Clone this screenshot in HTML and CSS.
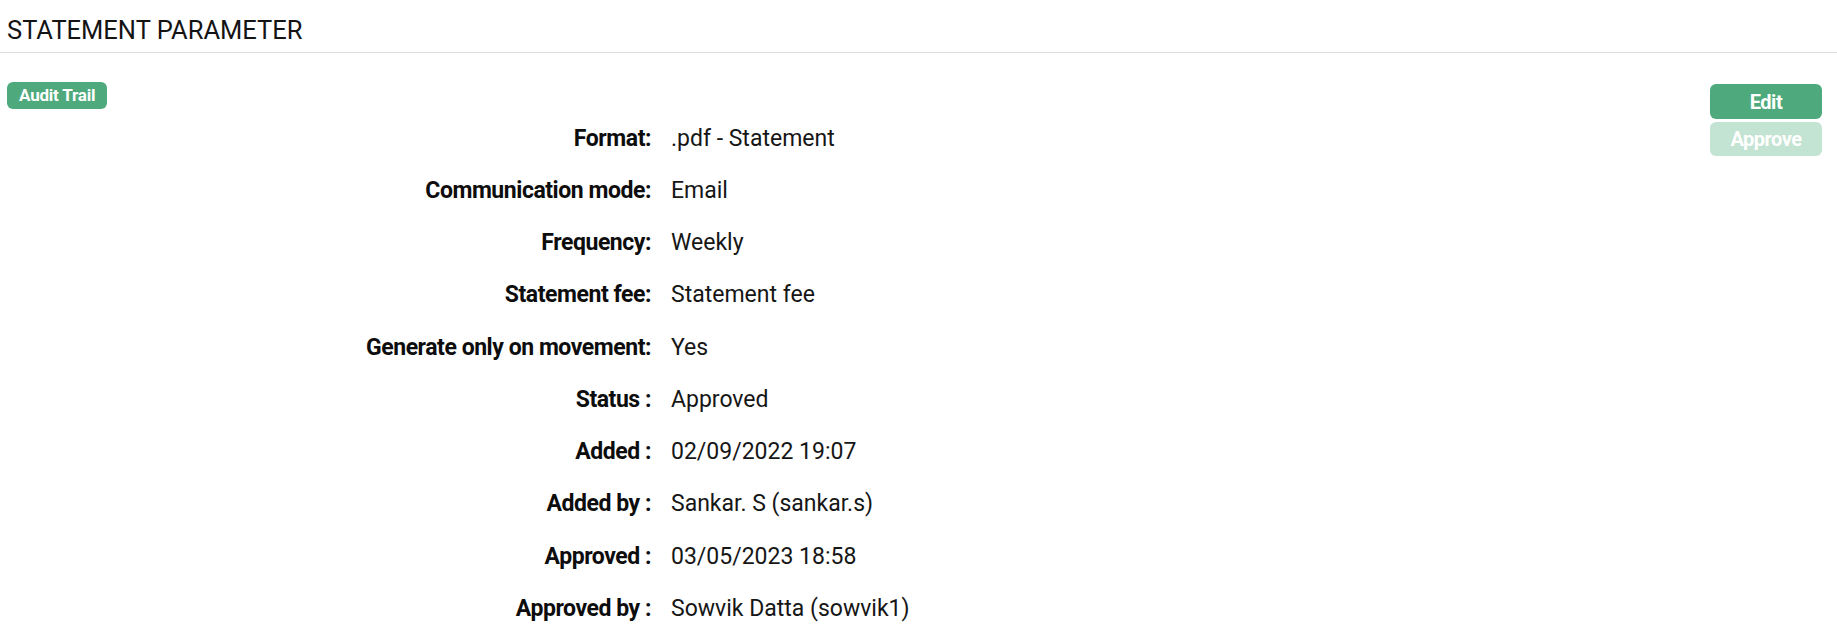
FILE: index.html
```html
<!DOCTYPE html>
<html lang="en">
<head>
<meta charset="utf-8">
<title>Statement Parameter</title>
<link rel="stylesheet" href="styles.css">
</head>
<body>
<header class="page-header">
  <h1 class="page-title">STATEMENT PARAMETER</h1>
</header>
<main class="content">
  <section class="details">
    <span class="badge">Audit Trail</span>
    <dl class="fields">
      <dt>Format:</dt><dd>.pdf - Statement</dd>
      <dt>Communication mode:</dt><dd>Email</dd>
      <dt>Frequency:</dt><dd>Weekly</dd>
      <dt>Statement fee:</dt><dd>Statement fee</dd>
      <dt>Generate only on movement:</dt><dd>Yes</dd>
      <dt>Status :</dt><dd>Approved</dd>
      <dt>Added :</dt><dd>02/09/2022 19:07</dd>
      <dt>Added by :</dt><dd>Sankar. S (sankar.s)</dd>
      <dt>Approved :</dt><dd>03/05/2023 18:58</dd>
      <dt>Approved by :</dt><dd>Sowvik Datta (sowvik1)</dd>
    </dl>
  </section>
  <aside class="actions">
    <button class="btn btn-primary" type="button">Edit</button>
    <button class="btn btn-disabled" type="button" disabled>Approve</button>
  </aside>
</main>
</body>
</html>
```
FILE: styles.css
```css
html, body {
  margin: 0;
  padding: 0;
  background: #ffffff;
}
body {
  font-family: Roboto, "Liberation Sans", Arial, sans-serif;
  color: #111111;
}
.page-header {
  padding: 15px 7px 7px;
  border-bottom: 1px solid #dedede;
}
.page-title {
  margin: 0;
  font-size: 25.5px;
  line-height: 30px;
  font-weight: 400;
  color: #141414;
}
.content {
  display: flex;
  align-items: flex-start;
  padding: 29px 15px 0 7px;
}
.details {
  flex: 1;
}
.badge {
  display: inline-block;
  height: 27px;
  line-height: 27px;
  padding: 0 12px;
  border-radius: 6px;
  background: #4eaa7c;
  color: #ffffff;
  font-size: 17px;
  font-weight: 700;
  letter-spacing: -0.2px;
}
.fields {
  display: grid;
  grid-template-columns: 644px 1fr;
  grid-auto-rows: 52.25px;
  column-gap: 20px;
  margin: 3px 0 0;
  align-items: center;
}
.fields dt {
  text-align: right;
  font-weight: 700;
  font-size: 23px;
  letter-spacing: -0.45px;
  color: #0d0d0d;
  white-space: nowrap;
}
.fields dd {
  margin: 0;
  font-size: 23px;
  font-weight: 400;
  color: #161616;
  white-space: nowrap;
}
.actions {
  display: flex;
  flex-direction: column;
  gap: 3px;
  width: 112px;
  margin-top: 2px;
}
.btn {
  width: 112px;
  border: none;
  border-radius: 6px;
  color: #ffffff;
  font-family: Roboto, "Liberation Sans", Arial, sans-serif;
  font-size: 20px;
  font-weight: 700;
  padding: 0;
  letter-spacing: -0.5px;
}
.btn-primary {
  height: 35px;
  background: #4eaa7c;
}
.btn-disabled {
  height: 34px;
  background: #c3e3d3;
}
```
